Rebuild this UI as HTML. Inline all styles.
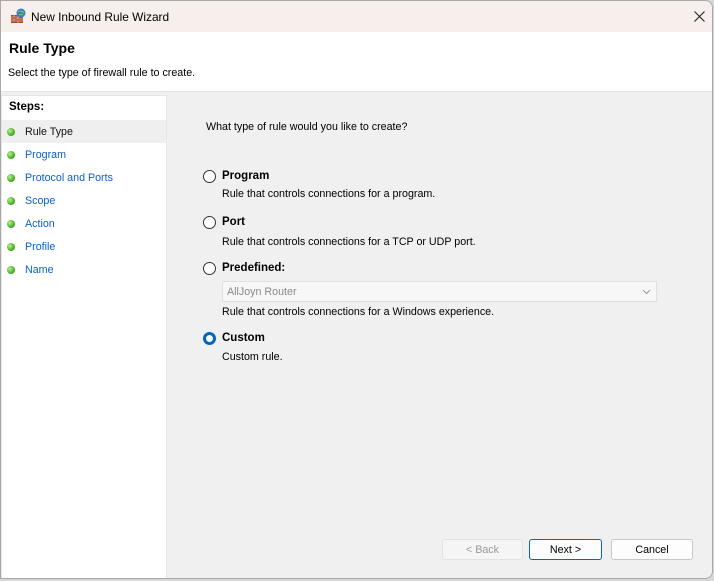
<!DOCTYPE html>
<html><head><style>
*{margin:0;padding:0;box-sizing:border-box}
body{width:714px;height:581px;background:#d8d8d8;font-family:"Liberation Sans",sans-serif;font-size:11px;color:#000;position:relative;overflow:hidden}
.win{position:absolute;left:0;top:0;width:713px;height:579px;background:#f0f0f0;border:1px solid #a8a8a8;border-radius:0 8px 8px 0;overflow:hidden}
.title{position:absolute;left:0;top:0;right:0;height:31px;background:#f7efec}
.title span{position:absolute;left:30px;top:9px;font-size:11.9px}
.head{position:absolute;left:0;top:31px;right:0;height:60px;background:#fff;border-bottom:1px solid #e3e3e3}
.head h1{position:absolute;left:8px;top:8px;font-size:14px;font-weight:bold}
.head p{position:absolute;left:7px;top:35px;font-size:10.7px}
.left{position:absolute;left:0;top:94px;width:166px;height:490px;background:#fff;border:1px solid #e6e6e6}
.steps{position:absolute;left:0;top:0;width:165px;height:22px;font-weight:bold;padding:5px 7px;font-size:11.5px}
.item{position:absolute;left:0;width:164px;height:23px;color:#0a5fcf;padding:6px 0 0 23px;font-size:10.7px}
.item.sel{background:#efefef;color:#111}
.dot{position:absolute;left:5px;top:8px;width:8px;height:8px;border-radius:50%;background:radial-gradient(circle at 35% 35%,#b6f08a,#3aa51c 70%)}
.main{position:absolute;left:168px;top:94px;right:0;bottom:0;background:#f0f0f0}
.t{position:absolute;font-size:10.7px}
.b{font-weight:bold;font-size:11.5px}
.radio{position:absolute;width:13px;height:13px;border-radius:50%;border:1px solid #333;background:#fff}
.radio.on{border:3.5px solid #0067c0}
.combo{position:absolute;left:221px;top:280px;width:435px;height:21px;background:#f7f7f7;border:1px solid #e0e0e0;color:#8a8a8a;padding:4px 4px;font-size:10.7px}
.btn{position:absolute;top:538px;height:21px;border:1px solid #c8c8c8;border-radius:3px;background:#fdfdfd;text-align:center;padding-top:4px;font-size:10.7px}
</style></head><body>
<div class="win">
<div class="title">
<svg style="position:absolute;left:9px;top:7px" width="16" height="16" viewBox="0 0 16 16"><rect x="1" y="7" width="12" height="8" fill="#a8452c"/><path d="M1 9h12M1 11h12M1 13h12M4 7v2M8 9v2M4 11v2M8 13v2M11 7v2" stroke="#e8b8a0" stroke-width=".7"/><circle cx="11" cy="5" r="4.5" fill="#2f7fd0"/><path d="M8 4q3-2 6 1M9 7q2-1 4 0" stroke="#7cc24a" stroke-width="1.3" fill="none"/></svg>
<span>New Inbound Rule Wizard</span>
<svg style="position:absolute;left:693px;top:10px" width="11" height="11"><path d="M.5 .5l10 10M10.5 .5l-10 10" stroke="#222" stroke-width="1.1"/></svg></div>
<div class="head"><h1>Rule Type</h1><p>Select the type of firewall rule to create.</p></div>
<div class="left">
<div class="steps">Steps:</div>
<div class="item sel" style="top:24px"><i class="dot"></i>Rule Type</div>
<div class="item" style="top:47px"><i class="dot"></i>Program</div>
<div class="item" style="top:70px"><i class="dot"></i>Protocol and Ports</div>
<div class="item" style="top:93px"><i class="dot"></i>Scope</div>
<div class="item" style="top:116px"><i class="dot"></i>Action</div>
<div class="item" style="top:139px"><i class="dot"></i>Profile</div>
<div class="item" style="top:162px"><i class="dot"></i>Name</div>
</div>
<div class="main"></div>
<div class="t" style="left:205px;top:120px">What type of rule would you like to create?</div>
<div class="radio" style="left:202px;top:169px"></div><div class="t b" style="left:221px;top:169px">Program</div>
<div class="t" style="left:221px;top:187px">Rule that controls connections for a program.</div>
<div class="radio" style="left:202px;top:215px"></div><div class="t b" style="left:221px;top:215px">Port</div>
<div class="t" style="left:221px;top:235px">Rule that controls connections for a TCP or UDP port.</div>
<div class="radio" style="left:202px;top:261px"></div><div class="t b" style="left:221px;top:261px">Predefined:</div>
<div class="combo">AllJoyn Router<svg style="position:absolute;right:5px;top:7px" width="9" height="6"><path d="M1 1l3.5 3.5L8 1" stroke="#999" fill="none"/></svg></div>
<div class="t" style="left:221px;top:305px">Rule that controls connections for a Windows experience.</div>
<div class="radio on" style="left:202px;top:331px"></div><div class="t b" style="left:221px;top:331px">Custom</div>
<div class="t" style="left:221px;top:350px">Custom rule.</div>
<div class="btn" style="left:441px;width:81px;color:#9a9a9a;background:#f5f5f5;border-color:#e2e2e2">&lt; Back</div>
<div class="btn" style="left:528px;width:73px;border:1px solid #0067c0">Next &gt;</div>
<div class="btn" style="left:610px;width:82px">Cancel</div>
</div>
</body></html>
